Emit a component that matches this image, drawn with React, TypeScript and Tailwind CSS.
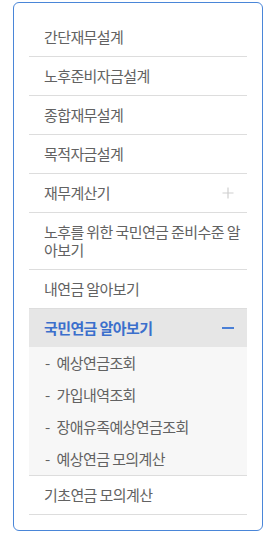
const menus = [
  "간단재무설계",
  "노후준비자금설계",
  "종합재무설계",
  "목적자금설계",
];

const subMenus = ["예상연금조회", "가입내역조회", "장애유족예상연금조회", "예상연금 모의계산"];

function PlusIcon() {
  return (
    <svg width="12" height="12" viewBox="0 0 12 12" className="shrink-0">
      <path d="M6 0.5V11.5M0.5 6H11.5" stroke="#cfcfcf" strokeWidth="1.2" />
    </svg>
  );
}

function MinusIcon() {
  return (
    <svg width="12" height="12" viewBox="0 0 12 12" className="shrink-0">
      <rect x="0" y="5" width="12" height="2" fill="#4a7fd6" />
    </svg>
  );
}

export default function App() {
  return (
    <div
      className="w-[268px] h-[542px] bg-white pt-[2px] pl-[13px]"
      style={{ fontFamily: '"Noto Sans CJK KR", "Noto Sans", sans-serif' }}
    >
      <nav className="w-[250px] rounded-[6px] border border-[#4a86d8] px-[15px] py-[15px]">
        <ul className="text-[15px] leading-[18px] tracking-[-0.6px] text-[#626262]">
          {menus.map((m) => (
            <li key={m} className="border-b border-[#dddddd] py-[10px] pl-[15px]">
              {m}
            </li>
          ))}
          <li className="flex items-center justify-between border-b border-[#dddddd] py-[10px] pl-[15px] pr-[13px]">
            <span>재무계산기</span>
            <PlusIcon />
          </li>
          <li className="border-b border-[#dddddd] py-[10px] pl-[15px] break-all">
            노후를 위한 국민연금 준비수준 알아보기
          </li>
          <li className="border-b border-[#dddddd] py-[10px] pl-[15px]">내연금 알아보기</li>
          <li className="border-b border-[#dddddd]">
            <div className="flex items-center justify-between bg-[#e6e6e6] py-[10px] pl-[15px] pr-[13px] font-bold text-[#3b6fcc]">
              <span>국민연금 알아보기</span>
              <MinusIcon />
            </div>
            <ul className="bg-[#f7f7f7]">
              {subMenus.map((s) => (
                <li key={s} className="flex py-[7px] pl-[16px]">
                  <span className="mr-[7px]">-</span>
                  <span>{s}</span>
                </li>
              ))}
            </ul>
          </li>
          <li className="border-b border-[#dddddd] py-[10px] pl-[15px]">기초연금 모의계산</li>
        </ul>
      </nav>
    </div>
  );
}
